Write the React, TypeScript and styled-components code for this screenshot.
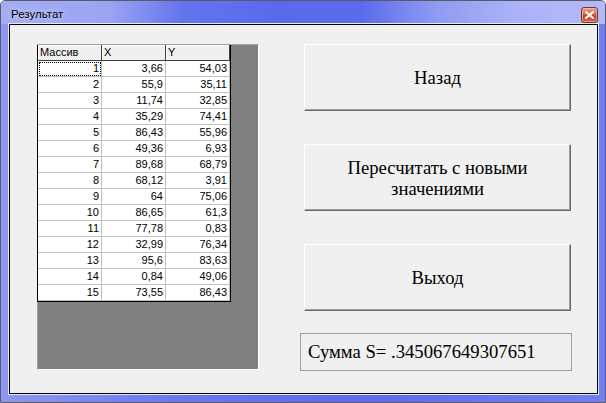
import React from "react";
import styled, { createGlobalStyle } from "styled-components";

const Global = createGlobalStyle`
  html, body { margin: 0; padding: 0; background: #ffffff; }
  body { width: 606px; height: 403px; overflow: hidden; }
`;

const Window = styled.div`
  box-sizing: border-box;
  width: 606px;
  height: 403px;
  border: 1px solid #5a5a66;
  border-radius: 5px 5px 0 0;
  background: linear-gradient(90deg, #8c98f0 0%, #6878ee 30%, #5d6cec 60%, #7080f0 100%);
  display: flex;
  flex-direction: column;
  overflow: hidden;
`;

const TitleBar = styled.div`
  height: 23px;
  flex: none;
  display: flex;
  align-items: center;
  justify-content: space-between;
  padding: 0 7px 0 10px;
  background: linear-gradient(
    90deg,
    #a3acf5 0%,
    #9aa4f3 18%,
    #6474ee 30%,
    #5b6aec 45%,
    #5c6bed 60%,
    #8f9bf3 72%,
    #aab3f7 85%,
    #b2baf8 100%
  );
`;

const Title = styled.span`
  font-family: "Liberation Sans", Arial, sans-serif;
  font-size: 11.5px;
  color: #000;
  padding-top: 2px;
  text-shadow: 0 0 6px rgba(255, 255, 255, 0.9);
`;

const CloseButton = styled.div`
  box-sizing: border-box;
  width: 17px;
  height: 16px;
  margin-top: 4px;
  border: 1px solid #7d3224;
  border-radius: 3px;
  background: linear-gradient(180deg, #e7a08b 0%, #d56a4f 45%, #c1462d 55%, #d0644a 100%);
  box-shadow: inset 0 0 0 1px rgba(255, 220, 200, 0.5);
  display: flex;
  align-items: center;
  justify-content: center;
`;

const Body = styled.div`
  flex: 1;
  margin: 0 7px 8px 8px;
  border: 1px solid #000;
  box-shadow: 0 0 0 1px #e6e9fb;
  background: #f0f0f0;
  display: flex;
  padding: 19px 0 0 27px;
  box-sizing: border-box;
`;

const GridFrame = styled.div`
  box-sizing: border-box;
  width: 222px;
  height: 326px;
  border-top: 1px solid #a0a0a0;
  border-left: 1px solid #a0a0a0;
  border-right: 1px solid #ffffff;
  border-bottom: 1px solid #ffffff;
  background: #808080;
  display: flex;
  align-items: flex-start;
`;

const Table = styled.div`
  display: grid;
  grid-template-columns: 64px 64px 64px;
  grid-auto-rows: 16px;
  background: #ffffff;
  border-right: 1px solid #000;
  border-bottom: 1px solid #000;
  border-left: 1px solid #000;
  margin-left: -1px;
  font-family: "Liberation Sans", Arial, sans-serif;
  font-size: 11px;
  color: #000;
`;

const HeadCell = styled.div`
  box-sizing: border-box;
  background: #f0f0f0;
  border-right: 1px solid #404040;
  border-bottom: 1px solid #404040;
  box-shadow: inset 1px 1px 0 #ffffff;
  padding: 0 2px;
  line-height: 15px;
  white-space: nowrap;
`;

const Cell = styled.div<{ $focus?: boolean }>`
  box-sizing: border-box;
  border-right: 1px solid #c0c0c0;
  border-bottom: 1px solid #c0c0c0;
  text-align: right;
  padding-right: 2px;
  line-height: 15px;
  white-space: nowrap;
  outline: ${(p) => (p.$focus ? "1px dotted #000" : "none")};
  outline-offset: -2px;
`;

const Side = styled.div`
  margin-left: 41px;
  width: 272px;
  display: flex;
  flex-direction: column;
`;

const Button = styled.div<{ $gap: number }>`
  box-sizing: border-box;
  width: 267px;
  height: 67px;
  margin-left: 4px;
  margin-bottom: ${(p) => p.$gap}px;
  background: #f0f0f0;
  border-top: 1px solid #ffffff;
  border-left: 1px solid #ffffff;
  border-right: 1px solid #696969;
  border-bottom: 1px solid #696969;
  box-shadow: inset -1px -1px 0 #a0a0a0;
  display: flex;
  align-items: center;
  justify-content: center;
  text-align: center;
  font-family: "Liberation Serif", "Times New Roman", serif;
  font-size: 18.67px;
  line-height: 21px;
  color: #000;
`;

const SumBox = styled.div`
  box-sizing: border-box;
  width: 272px;
  height: 38px;
  border: 1px solid #a0a0a0;
  display: flex;
  align-items: center;
  padding-left: 7px;
  font-family: "Liberation Serif", "Times New Roman", serif;
  font-size: 18.67px;
  color: #000;
  white-space: nowrap;
`;

const rows: [number, string, string][] = [
  [1, "3,66", "54,03"],
  [2, "55,9", "35,11"],
  [3, "11,74", "32,85"],
  [4, "35,29", "74,41"],
  [5, "86,43", "55,96"],
  [6, "49,36", "6,93"],
  [7, "89,68", "68,79"],
  [8, "68,12", "3,91"],
  [9, "64", "75,06"],
  [10, "86,65", "61,3"],
  [11, "77,78", "0,83"],
  [12, "32,99", "76,34"],
  [13, "95,6", "83,63"],
  [14, "0,84", "49,06"],
  [15, "73,55", "86,43"],
];

export default function App() {
  return (
    <>
      <Global />
      <Window>
        <TitleBar>
          <Title>Результат</Title>
          <CloseButton>
            <svg width="9" height="8" viewBox="0 0 9 8">
              <path d="M1 1 L8 7 M8 1 L1 7" stroke="#ffffff" strokeWidth="2" strokeLinecap="square" />
            </svg>
          </CloseButton>
        </TitleBar>
        <Body>
          <GridFrame>
            <Table>
              <HeadCell>Массив</HeadCell>
              <HeadCell>X</HeadCell>
              <HeadCell>Y</HeadCell>
              {rows.map(([n, x, y]) => (
                <React.Fragment key={n}>
                  <Cell $focus={n === 1}>{n}</Cell>
                  <Cell>{x}</Cell>
                  <Cell>{y}</Cell>
                </React.Fragment>
              ))}
            </Table>
          </GridFrame>
          <Side>
            <Button $gap={33}>Назад</Button>
            <Button $gap={33}>
              Пересчитать с новыми
              <br />
              значениями
            </Button>
            <Button $gap={22}>Выход</Button>
            <SumBox>Сумма S= .345067649307651</SumBox>
          </Side>
        </Body>
      </Window>
    </>
  );
}
